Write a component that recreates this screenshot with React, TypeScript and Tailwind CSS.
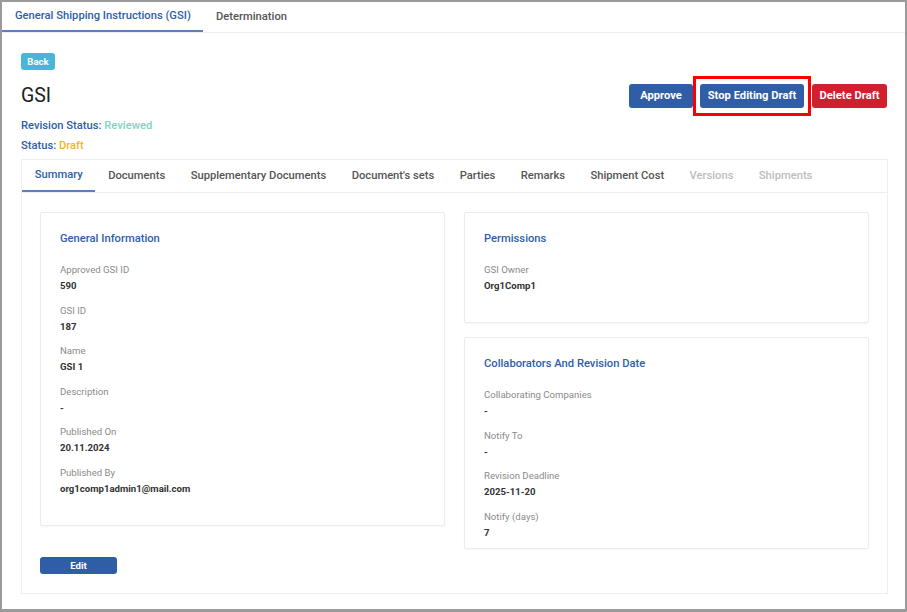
import React from "react";

const Field = ({ label, value }: { label: string; value: string }) => (
  <div className="flex flex-col">
    <div className="text-[9.6px] leading-[14px] text-[#8a8a8a]">{label}</div>
    <div className="mt-[2px] text-[9.6px] leading-[14px] font-bold text-[#333]">{value}</div>
  </div>
);

const Card = ({
  title,
  fields,
  pb,
}: {
  title: string;
  fields: { label: string; value: string }[];
  pb: string;
}) => (
  <div className={`border border-[#ececec] rounded-[2px] bg-white pt-[18px] px-[19px] shadow-[0_1px_2px_rgba(0,0,0,0.04)] ${pb}`}>
    <div className="text-[11.2px] leading-[16px] font-medium text-[#2f5ea6]">{title}</div>
    <div className="mt-[16px] flex flex-col gap-[10.5px]">
      {fields.map((f) => (
        <Field key={f.label} label={f.label} value={f.value} />
      ))}
    </div>
  </div>
);

export default function App() {
  const tabs = [
    { t: "Summary", active: true },
    { t: "Documents" },
    { t: "Supplementary Documents" },
    { t: "Document's sets" },
    { t: "Parties" },
    { t: "Remarks" },
    { t: "Shipment Cost" },
    { t: "Versions", disabled: true },
    { t: "Shipments", disabled: true },
  ];
  return (
    <div
      className="w-[907px] h-[612px] bg-white border-l-2 border-t-2 border-r-2 border-b-[3px] border-[#9a9a9a] overflow-hidden"
      style={{ fontFamily: "Roboto, 'Liberation Sans', sans-serif" }}
    >
      {/* top tabs */}
      <div className="flex h-[31px] border-b border-[#eeeeee]">
        <div className="px-[13px] h-full flex items-center whitespace-nowrap text-[11.2px] font-medium text-[#2f5ea6] border-b-2 border-[#5b7fbf] w-[201px]">
          General Shipping Instructions (GSI)
        </div>
        <div className="px-[13px] h-full flex items-center whitespace-nowrap text-[11.2px] font-medium text-[#555]">
          Determination
        </div>
      </div>

      <div className="pl-[19px] pr-[17px] pt-[20px]">
        <button className="block h-[17px] w-[34px] rounded-[3px] bg-[#48b5d9] text-white text-[9.6px] font-bold leading-[17px] text-center">
          Back
        </button>
        <div className="mt-[14px] flex items-center justify-between h-[24px]">
          <div className="text-[19.5px] leading-[24px] text-[#222]">GSI</div>
          <div className="flex items-center mr-[1px]">
            <button className="h-[24px] w-[64px] rounded-[3px] bg-[#2f5ea6] text-white text-[11.2px] font-bold">
              Approve
            </button>
            <div className="border-[3px] border-[#ff0000] px-[4px] py-[5px] -my-[8px]">
              <button className="h-[24px] w-[104px] rounded-[3px] bg-[#2f5ea6] text-white text-[11.2px] font-bold block">
                Stop Editing Draft
              </button>
            </div>
            <button className="h-[24px] w-[75px] rounded-[3px] bg-[#d0202f] text-white text-[11.2px] font-bold ml-[1px]">
              Delete Draft
            </button>
          </div>
        </div>
        <div className="mt-[10px] text-[11.2px] leading-[16px] font-medium text-[#2f5ea6]">
          Revision Status: <span className="text-[#7fd4c4]">Reviewed</span>
        </div>
        <div className="mt-[4px] text-[11.2px] leading-[16px] font-medium text-[#2f5ea6]">
          Status: <span className="text-[#f5b324]">Draft</span>
        </div>

        {/* inner card */}
        <div className="mt-[5px] border border-[#eeeeee] h-[435px] flex flex-col">
          <div className="flex h-[33px] border-b border-[#eeeeee]">
            {tabs.map((tb) => (
              <div
                key={tb.t}
                className={
                  "px-[12.7px] h-full flex items-center whitespace-nowrap text-[11.2px] font-medium " +
                  (tb.active
                    ? "text-[#2f5ea6] border-b-2 border-[#5b7fbf]"
                    : tb.disabled
                    ? "text-[#bdbdbd]"
                    : "text-[#555]")
                }
              >
                {tb.t}
              </div>
            ))}
          </div>
          <div className="px-[18px] pt-[19px]">
            <div className="grid grid-cols-2 gap-x-[19px] items-start">
              <Card
                title="General Information"
                pb="pb-[29px]"
                fields={[
                  { label: "Approved GSI ID", value: "590" },
                  { label: "GSI ID", value: "187" },
                  { label: "Name", value: "GSI 1" },
                  { label: "Description", value: "-" },
                  { label: "Published On", value: "20.11.2024" },
                  { label: "Published By", value: "org1comp1admin1@mail.com" },
                ]}
              />
              <div className="flex flex-col gap-[14px]">
                <Card
                  title="Permissions"
                  pb="pb-[29px]"
                  fields={[{ label: "GSI Owner", value: "Org1Comp1" }]}
                />
                <Card
                  title="Collaborators And Revision Date"
                  pb="pb-[8px]"
                  fields={[
                    { label: "Collaborating Companies", value: "-" },
                    { label: "Notify To", value: "-" },
                    { label: "Revision Deadline", value: "2025-11-20" },
                    { label: "Notify (days)", value: "7" },
                  ]}
                />
              </div>
            </div>
            <button className="block mt-[8px] h-[17px] w-[77px] rounded-[3px] bg-[#2f5ea6] text-white text-[9.6px] font-bold leading-[17px]">
              Edit
            </button>
          </div>
        </div>
      </div>
    </div>
  );
}
